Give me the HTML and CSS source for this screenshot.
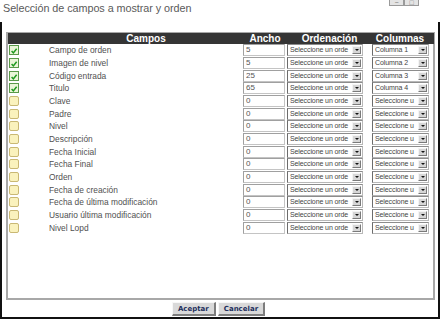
FILE: index.html
```html
<!DOCTYPE html>
<html lang="es">
<head>
    <meta charset="UTF-8">
    <title>Selección de campos</title>
    <link rel="stylesheet" href="styles.css">
</head>
<body>
    <div class="cabecera">
        <div class="titulo">Selección de campos a mostrar y orden</div>
        <div class="ventana">
            <span class="vbtn">&minus;</span>
            <span class="vbtn">&#9633;</span>
        </div>
    </div>

    <div class="marco">
        <div class="panel">
            <div class="tabla" id="tabla">
                <div class="th"></div>
                <div class="th">Campos</div>
                <div class="th">Ancho</div>
                <div class="th">Ordenación</div>
                <div class="th th-col">Columnas</div>
            </div>
        </div>
        <div class="botones">
            <button class="btn">Aceptar</button>
            <button class="btn">Cancelar</button>
        </div>
    </div>

    <script>
        // filas de la tabla
        let campos = [
            ["Campo de orden", true, "5", "Columna 1"],
            ["Imagen de nivel", true, "5", "Columna 2"],
            ["Código entrada", true, "25", "Columna 3"],
            ["Titulo", true, "65", "Columna 4"],
            ["Clave", false, "0", ""],
            ["Padre", false, "0", ""],
            ["Nivel", false, "0", ""],
            ["Descripción", false, "0", ""],
            ["Fecha Inicial", false, "0", ""],
            ["Fecha Final", false, "0", ""],
            ["Orden", false, "0", ""],
            ["Fecha de creación", false, "0", ""],
            ["Fecha de última modificación", false, "0", ""],
            ["Usuario última modificación", false, "0", ""],
            ["Nivel Lopd", false, "0", ""]
        ];

        let tabla = document.getElementById("tabla");
        let check = '<svg viewBox="0 0 10 10" width="10" height="10"><path d="M2 5 L4.2 7.4 L8.3 2.2" fill="none" stroke="#1f9a1f" stroke-width="1.9"/></svg>';

        campos.forEach(function (c) {
            let html = '';
            html += '<div class="celda"><span class="caja ' + (c[1] ? 'marcada' : 'vacia') + '">' + (c[1] ? check : '') + '</span></div>';
            html += '<div class="celda nombre">' + c[0] + '</div>';
            html += '<div class="celda"><span class="entrada">' + c[2] + '</span></div>';
            html += '<div class="celda"><span class="combo ancho-orden"><span class="texto">Seleccione un orde</span><span class="flecha"></span></span></div>';
            html += '<div class="celda"><span class="combo ancho-col"><span class="texto">' + (c[3] || 'Seleccione u') + '</span><span class="flecha"></span></span></div>';
            tabla.insertAdjacentHTML("beforeend", html);
        });
    </script>
</body>
</html>
```

FILE: styles.css
```css
body {
    margin: 0;
    background-color: #ffffff;
    font-family: "Liberation Sans", Arial, sans-serif;
    width: 440px;
    height: 321px;
    overflow: hidden;
}

/* titulo de la ventana */
.cabecera {
    display: flex;
    justify-content: space-between;
    height: 22px;
}

.titulo {
    font-size: 10.8px;
    color: #5a5a5a;
    padding: 2px 0 0 3px;
    letter-spacing: -0.05px;
}

.ventana {
    display: flex;
    margin-right: 21px;
    margin-top: -5px;
    height: 10px;
}

.vbtn {
    width: 13px;
    height: 9px;
    border: 1px solid #9a9a9a;
    background-color: #e4e4e4;
    font-size: 7px;
    line-height: 13px;
    color: #777;
    text-align: center;
}

/* marco negro */
.marco {
    border-left: 2px solid #111;
    border-right: 2px solid #111;
    border-bottom: 2px solid #111;
    height: 297px;
    padding: 10px 3px 0 4px;
    box-sizing: border-box;
}

.panel {
    border: 2px solid #a8a8a8;
    border-top: 1px solid #a8a8a8;
    height: 268px;
    box-sizing: border-box;
}

.tabla {
    display: grid;
    grid-template-columns: 41px 194px 44px 85px 62px;
    grid-auto-rows: 12.67px;
    grid-template-rows: 11px;
}

.th {
    background-color: #353535;
    color: #ffffff;
    font-weight: bold;
    font-size: 10px;
    line-height: 11px;
    text-align: center;
}

.th-col {
    padding-right: 6px;
}

.celda {
    display: flex;
    align-items: center;
    font-size: 8px;
    color: #444;
}

.nombre {
    color: #505050;
    font-size: 8.4px;
}

.caja {
    width: 10px;
    height: 10px;
    margin-left: 1px;
    box-sizing: border-box;
    display: flex;
}

.caja svg {
    display: block;
}

.marcada {
    border: 1px solid #5b9a4a;
    background-color: #eaf6d8;
}

.vacia {
    border: 1px solid #c9b874;
    border-radius: 2px;
    background-color: #faf2bd;
}

.entrada {
    width: 38px;
    height: 10px;
    border: 1px solid #c4c4c4;
    border-top-color: #a0a0a0;
    border-left-color: #a0a0a0;
    font-size: 8px;
    line-height: 10px;
    padding-left: 2px;
    box-sizing: content-box;
    color: #555;
}

.combo {
    display: flex;
    height: 10px;
    border: 1px solid #b8b8b8;
    border-left: 1px solid #6c6c6c;
    border-top: 1px solid #8c8c8c;
    font-size: 7px;
    line-height: 10px;
    color: #444;
}

.ancho-orden {
    width: 74px;
}

.ancho-col {
    width: 55px;
}

.texto {
    flex: 1;
    padding-left: 2px;
    white-space: nowrap;
    letter-spacing: -0.1px;
}

.flecha {
    width: 9px;
    height: 8px;
    margin: 1px 1px 0 0;
    background-color: #d6d6d6;
    border: 1px solid #f4f4f4;
    border-right-color: #7a7a7a;
    border-bottom-color: #7a7a7a;
    box-sizing: border-box;
    position: relative;
}

.flecha::after {
    content: "";
    position: absolute;
    left: 2px;
    top: 2px;
    border-left: 2px solid transparent;
    border-right: 2px solid transparent;
    border-top: 2px solid #111;
}

/* botones de abajo */
.botones {
    display: flex;
    justify-content: center;
    gap: 2px;
    padding-top: 2px;
    padding-right: 4px;
}

.btn {
    font-family: "DejaVu Sans", Verdana, sans-serif;
    font-size: 7px;
    font-weight: bold;
    color: #1d2e5c;
    background-color: #d9d9d9;
    border: 1px solid #f7f7f7;
    border-right: 2px solid #7d7d7d;
    border-bottom: 2px solid #7d7d7d;
    height: 14px;
    padding: 0 5px;
    margin: 0;
}
```
